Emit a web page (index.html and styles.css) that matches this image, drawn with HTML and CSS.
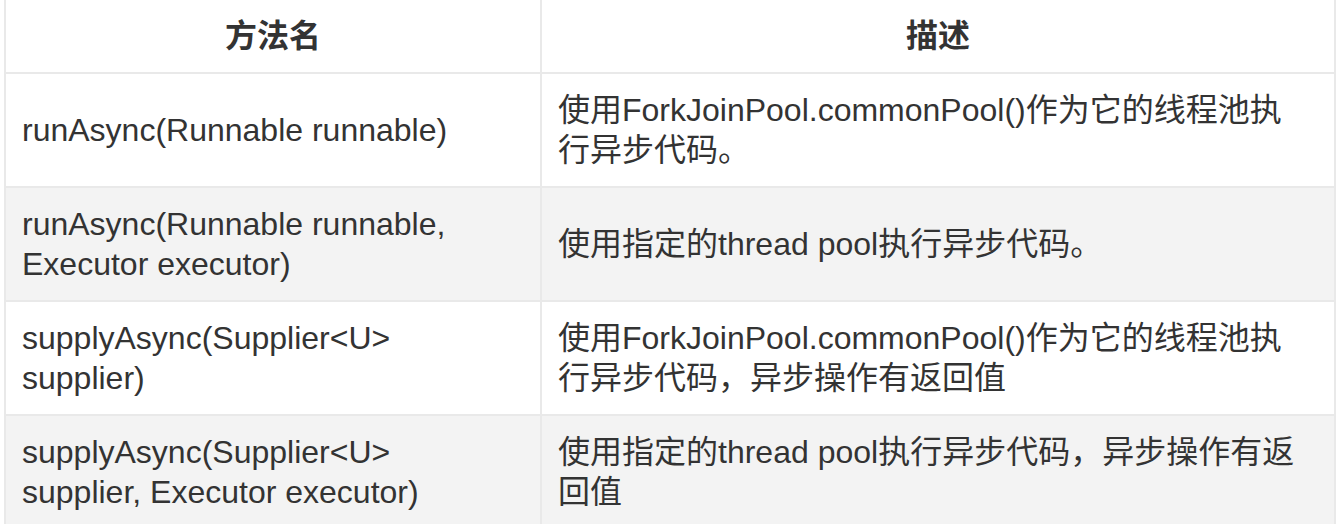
FILE: index.html
```html
<!DOCTYPE html>
<html lang="zh-CN">
<head>
<meta charset="utf-8">
<title>CompletableFuture 方法</title>
<link rel="stylesheet" href="styles.css">
</head>
<body>
<div class="wrap">
<table class="api-table">
  <colgroup>
    <col class="col-name">
    <col class="col-desc">
  </colgroup>
  <thead>
    <tr><th>方法名</th><th>描述</th></tr>
  </thead>
  <tbody>
    <tr><td>runAsync(Runnable runnable)</td><td>使用ForkJoinPool.commonPool()作为它的线程池执<br>行异步代码。</td></tr>
    <tr><td>runAsync(Runnable runnable,<br>Executor executor)</td><td>使用指定的thread pool执行异步代码。</td></tr>
    <tr><td>supplyAsync(Supplier&lt;U&gt;<br>supplier)</td><td>使用ForkJoinPool.commonPool()作为它的线程池执<br>行异步代码，异步操作有返回值</td></tr>
    <tr><td>supplyAsync(Supplier&lt;U&gt;<br>supplier, Executor executor)</td><td>使用指定的thread pool执行异步代码，异步操作有返<br>回值</td></tr>
  </tbody>
</table>
</div>
</body>
</html>
```
FILE: styles.css
```css
html, body {
  margin: 0;
  padding: 0;
  background: #ffffff;
}
.wrap {
  padding: 0 2px 0 4px;
  margin-top: -2px;
}
.api-table {
  width: 100%;
  border-collapse: collapse;
  font-family: "Liberation Sans", "Noto Sans CJK SC", sans-serif;
  font-size: 32px;
  line-height: 40px;
  color: #333333;
}
.col-name { width: 536px; }
.api-table th,
.api-table td {
  border: 2px solid #e9e9e9;
  padding: 16px 16px;
  text-align: left;
  vertical-align: middle;
}
.api-table th {
  text-align: center;
  font-weight: 700;
}
.api-table tbody tr:nth-child(even) td {
  background: #f3f3f3;
}
```
